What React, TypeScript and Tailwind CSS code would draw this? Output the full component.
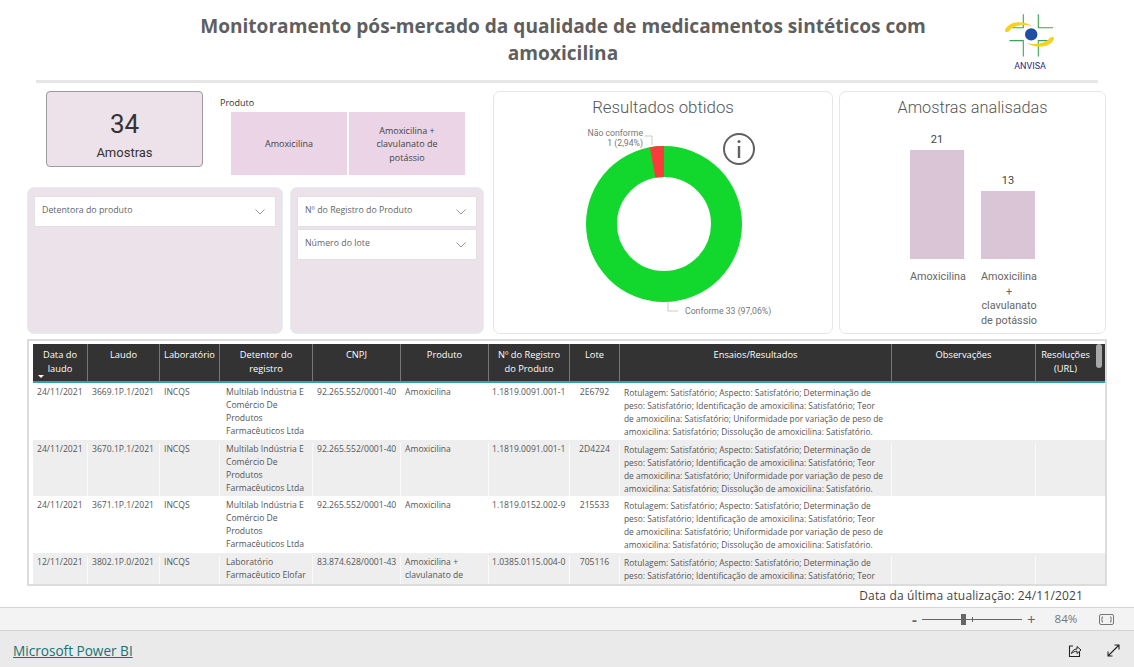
import React from 'react';

const colTemplate = 'grid grid-cols-[55px_72px_60px_93px_88px_88px_81px_50px_272px_144px_59px]';

const headers = ['Data do laudo', 'Laudo', 'Laboratório', 'Detentor do registro', 'CNPJ', 'Produto', 'Nº do Registro do Produto', 'Lote', 'Ensaios/Resultados', 'Observações', 'Resoluções (URL)'];

const ensaios = [
  'Rotulagem: Satisfatório; Aspecto: Satisfatório; Determinação de',
  'peso: Satisfatório; Identificação de amoxicilina: Satisfatório; Teor',
  'de amoxicilina: Satisfatório; Uniformidade por variação de peso de',
  'amoxicilina: Satisfatório; Dissolução de amoxicilina: Satisfatório.',
];

const multilab = ['Multilab Indústria E', 'Comércio De', 'Produtos', 'Farmacêuticos Ltda'];

const rows = [
  { data: '24/11/2021', laudo: '3669.1P.1/2021', detentor: multilab, cnpj: '92.265.552/0001-40', produto: ['Amoxicilina'], registro: '1.1819.0091.001-1', lote: '2E6792' },
  { data: '24/11/2021', laudo: '3670.1P.1/2021', detentor: multilab, cnpj: '92.265.552/0001-40', produto: ['Amoxicilina'], registro: '1.1819.0091.001-1', lote: '2D4224' },
  { data: '24/11/2021', laudo: '3671.1P.1/2021', detentor: multilab, cnpj: '92.265.552/0001-40', produto: ['Amoxicilina'], registro: '1.1819.0152.002-9', lote: '215533' },
  { data: '12/11/2021', laudo: '3802.1P.0/2021', detentor: ['Laboratório', 'Farmacêutico Elofar', 'Ltda'], cnpj: '83.874.628/0001-43', produto: ['Amoxicilina +', 'clavulanato de', 'potássio'], registro: '1.0385.0115.004-0', lote: '705116' },
];

const Lines = ({ items }: { items: string[] }) => (
  <>
    {items.map((l) => (
      <div key={l} className="whitespace-nowrap">{l}</div>
    ))}
  </>
);

const Chevron = () => (
  <svg width="10" height="6" viewBox="0 0 10 6" className="mt-[5px] shrink-0">
    <path d="M0.5 0.5 L5 5 L9.5 0.5" fill="none" stroke="#777" strokeWidth="0.8" />
  </svg>
);

const Dropdown = ({ label }: { label: string }) => (
  <div className="flex h-[31px] justify-between border border-[#e4dfe3] bg-white pl-[7px] pr-[10px] pt-[7px] text-[8.8px] leading-[13px] text-[#666]">
    <span>{label}</span>
    <Chevron />
  </div>
);

const Logo = () => (
  <svg width="50" height="46" viewBox="0 0 50 46" className="block">
    <g stroke="#3aa655" strokeWidth="1.1" fill="none">
      <path d="M18.3 1.3 V14.7 H5" />
      <path d="M33.3 1.3 V14.7 H48" />
      <path d="M18.3 43.5 V27.6 H4.5" />
      <path d="M33.3 43.5 V27.6 H46" />
    </g>
    <path d="M0 17 C3 10 12 8 20 10 C24 11 26 12 27 13 C20 11 10 12 5 17 C3 20 0 20 0 17 Z" fill="#f6d21f" />
    <path d="M0 17 C3 10 12 8 20 10 C24 11 26 12 27 13 C20 11 10 12 5 17 C3 20 0 20 0 17 Z" fill="#f6d21f" transform="rotate(180 24.5 21.5)" />
    <circle cx="26.2" cy="21.4" r="6.2" fill="#1f4fa3" />
  </svg>
);

const Donut = () => (
  <svg width="340" height="210" viewBox="0 0 340 210" className="block">
    <circle cx="170" cy="104" r="62.5" fill="none" stroke="#12d82e" strokeWidth="31" />
    <path d="M170 26 A78 78 0 0 0 155.7 27.3 L161.4 57.8 A47 47 0 0 1 170 57 Z" fill="#fb3b3b" />
    <path d="M151 16 H158 V25" fill="none" stroke="#bbb" strokeWidth="0.8" />
    <path d="M174 182 V191 H184" fill="none" stroke="#bbb" strokeWidth="0.8" />
    <g fontFamily="Roboto, sans-serif" fontSize="8.7" fill="#777">
      <text x="149" y="16" textAnchor="end">Não conforme</text>
      <text x="149" y="26" textAnchor="end">1 (2,94%)</text>
      <text x="191" y="194">Conforme 33 (97,06%)</text>
    </g>
    <circle cx="245" cy="29" r="15" fill="none" stroke="#606060" strokeWidth="2" />
    <circle cx="245" cy="21.5" r="1.5" fill="#606060" />
    <path d="M245 26 V38" stroke="#606060" strokeWidth="2.4" />
  </svg>
);

export default function App() {
  return (
    <div className="flex h-[667px] w-[1134px] flex-col overflow-hidden bg-white font-['Open_Sans',sans-serif]">
      {/* Report canvas */}
      <div className="h-[607px] shrink-0 px-[27px]">
        {/* Header */}
        <div className="relative mx-[9px] h-[83px] border-b-[3px] border-[#e6e6e6]">
          <h1 className="pl-[42px] pr-[50px] pt-[13px] text-center text-[19.1px] font-bold leading-[27px] text-[#5f5f5f]">
            Monitoramento pós-mercado da qualidade de medicamentos sintéticos com
            <br />
            amoxicilina
          </h1>
          <div className="absolute left-[969px] top-[13px] flex flex-col items-center">
            <Logo />
            <span className="mt-[2px] font-['Roboto',sans-serif] text-[9px] leading-[10px] text-[#2c2a7c]">ANVISA</span>
          </div>
        </div>

        {/* Filters and charts */}
        <div className="mt-[8px] flex h-[243px]">
          <div className="flex w-[458px] flex-col">
            <div className="flex h-[96px] pl-[19px]">
              <div className="flex h-[76px] w-[157px] flex-col items-center rounded-[4px] border border-[#9c9a9c] bg-[#ede1ea] pt-[14px] font-['Roboto',sans-serif] text-[#333]">
                <span className="text-[26px] leading-[36px]">34</span>
                <span className="mt-[2px] text-[13px] leading-[18px]">Amostras</span>
              </div>
              <div className="ml-[17px]">
                <div className="h-[21px] pt-[6px] text-[9px] leading-[12px] text-[#333]">Produto</div>
                <div className="ml-[11px] flex gap-[2px] text-[9px] leading-[13.5px] text-[#444]">
                  <div className="flex h-[63px] w-[116px] items-center justify-center bg-[#ead4e5]">Amoxicilina</div>
                  <div className="flex h-[63px] w-[116px] items-center justify-center bg-[#ead4e5] pt-[1px] text-center">
                    <span>
                      Amoxicilina +<br />
                      clavulanato de<br />
                      potássio
                    </span>
                  </div>
                </div>
              </div>
            </div>
            <div className="flex h-[147px] gap-[7px]">
              <div className="w-[256px] rounded-[7px] border border-[#e4edf3] bg-[#ece2ea] px-[6px] pt-[8px]">
                <Dropdown label="Detentora do produto" />
              </div>
              <div className="flex w-[194px] flex-col gap-[2px] rounded-[7px] border border-[#e4edf3] bg-[#ece2ea] px-[6px] pt-[8px]">
                <Dropdown label="Nº do Registro do Produto" />
                <Dropdown label="Número do lote" />
              </div>
            </div>
          </div>

          <div className="ml-[8px] h-[243px] w-[340px] rounded-[7px] border border-[#e6e6e6] font-['Roboto',sans-serif]">
            <div className="pt-[2px] text-center text-[16.8px] font-light leading-[26px] text-[#555]">Resultados obtidos</div>
            <Donut />
          </div>

          <div className="ml-[6px] h-[243px] w-[267px] rounded-[7px] border border-[#e6e6e6] font-['Roboto',sans-serif]">
            <div className="pt-[3px] text-center text-[16.3px] font-light leading-[26px] text-[#555]">Amostras analisadas</div>
            <div className="mt-[8px] flex h-[130px] items-end pl-[70px] text-center text-[11px] leading-[14px] text-[#444]">
              <div className="w-[54px]">
                <div className="pb-[3px]">21</div>
                <div className="h-[109px] bg-[#dac5d6]" />
              </div>
              <div className="ml-[17px] w-[54px]">
                <div className="pb-[3px]">13</div>
                <div className="h-[68px] bg-[#dac5d6]" />
              </div>
            </div>
            <div className="mt-[11px] flex pl-[64px] text-center text-[10.8px] leading-[14.5px] text-[#666]">
              <div className="w-[68px]">Amoxicilina</div>
              <div className="ml-[3px] w-[68px]">
                Amoxicilina
                <br />+<br />
                clavulanato
                <br />
                de potássio
              </div>
            </div>
          </div>
        </div>

        {/* Table */}
        <div className="relative mt-[5px] h-[247px] w-[1080px] border-2 border-[#dcdcdc] pl-[4px] pt-[3px] text-[8.6px] leading-[13px]">
          <div className="h-[240px] overflow-hidden">
            <div className={`${colTemplate} h-[39px] border-b-2 border-[#2ea5a5] bg-[#333333] text-center text-[9.3px] font-medium leading-[13.5px] text-white`}>
              {headers.map((h) => (
                <div key={h} className="border-r border-[#777] px-[4px] pt-[4px] last:border-r-0">
                  {h}
                </div>
              ))}
            </div>
            {rows.map((r, i) => (
              <div key={r.laudo} className={`${colTemplate} h-[56.5px] pt-[3px] text-[#555] [&>div]:border-r [&>div]:border-white/70 [&>div:last-child]:border-r-0 ${i % 2 === 1 ? 'bg-[#eeeeee]' : 'bg-white'}`}>
                <div className="pl-[4px]">{r.data}</div>
                <div className="pl-[4px]">{r.laudo}</div>
                <div className="pl-[4px]">INCQS</div>
                <div className="pl-[6px]"><Lines items={r.detentor} /></div>
                <div className="pl-[4px]">{r.cnpj}</div>
                <div className="pl-[4px]"><Lines items={r.produto} /></div>
                <div className="pl-[3px]">{r.registro}</div>
                <div className="text-center">{r.lote}</div>
                <div className="pl-[4px] text-[8.4px]"><Lines items={ensaios} /></div>
                <div />
                <div />
              </div>
            ))}
          </div>
          <div className="absolute left-[9px] top-[34px] h-0 w-0 border-x-[3px] border-t-[3px] border-x-transparent border-t-white" />
          <div className="absolute left-[1067px] top-[3px] h-[24px] w-[6px] rounded-[3px] bg-[#a8a8a8]" />
        </div>

        <div className="pr-[24px] pt-[2px] text-right text-[12px] leading-[16px] tracking-[0.15px] text-[#444]">
          Data da última atualização: 24/11/2021
        </div>
      </div>

      {/* Zoom bar */}
      <div className="flex h-[24px] shrink-0 items-center border-y border-[#d4d4d4] bg-[#f3f3f3] pl-[912px] text-[#666]">
        <span className="w-[10px] text-[15px] font-bold leading-none">-</span>
        <div className="relative h-px w-[100px] bg-[#666]">
          <div className="absolute left-[39px] top-[-5px] h-[11px] w-[5px] bg-[#666]" />
          <div className="absolute left-[50px] top-[-2px] h-[5px] w-px bg-[#666]" />
        </div>
        <span className="ml-[5px] text-[15px] leading-none">+</span>
        <span className="ml-[19px] w-[30px] text-[11.5px] leading-none text-[#777]">84%</span>
        <svg width="15" height="11" viewBox="0 0 15 11" className="ml-[14px]">
          <rect x="0.5" y="0.5" width="14" height="10" rx="1.5" fill="none" stroke="#777" />
          <path d="M4 3 H3 V8 H4 M11 3 H12 V8 H11" fill="none" stroke="#777" />
        </svg>
      </div>

      {/* Footer */}
      <div className="flex flex-1 items-center justify-between bg-[#eaeaea] pl-[13px] pr-[14px] pt-[3px]">
        <a className="text-[13.6px] leading-[18px] text-[#117577] underline">Microsoft Power BI</a>
        <div className="flex items-center gap-[25px]">
          <svg width="14" height="14" viewBox="0 0 14 14">
            <path d="M5 2 H1.5 V12.5 H11.5 V8" fill="none" stroke="#222" strokeWidth="1.1" strokeLinejoin="round" />
            <path d="M3.5 9.5 C4 6.5 6.5 5 9 5 V2.5 L13 6 L9 9.5 V7.2 C7 7.2 5 8 3.5 9.5 Z" fill="none" stroke="#222" strokeWidth="1" strokeLinejoin="round" />
          </svg>
          <svg width="13" height="13" viewBox="0 0 13 13">
            <path d="M1 12 L12 1 M7.5 1 H12 V5.5 M1 7.5 V12 H5.5" fill="none" stroke="#222" strokeWidth="1.1" />
          </svg>
        </div>
      </div>
    </div>
  );
}
